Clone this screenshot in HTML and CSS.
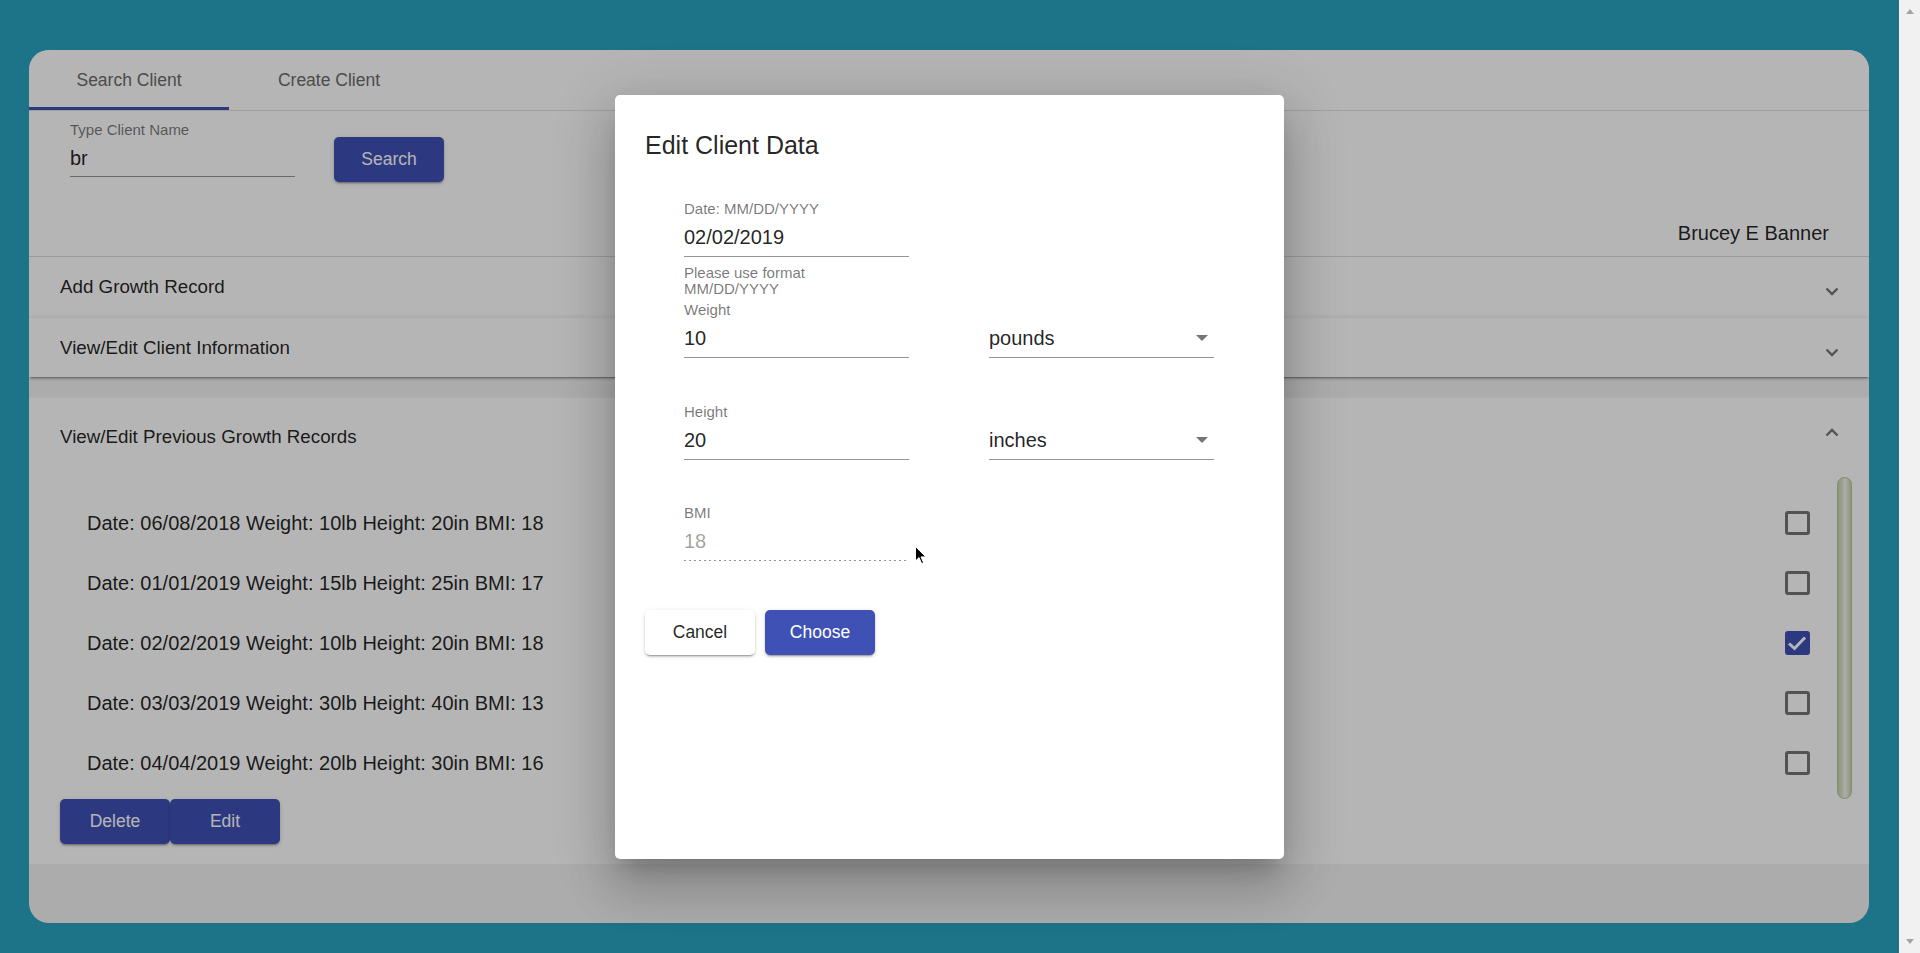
FILE: index.html
```html
<!DOCTYPE html>
<html lang="en">
<head>
<meta charset="utf-8">
<title>Client Growth</title>
<link rel="stylesheet" href="styles.css">
</head>
<body>
<div class="viewport">
  <div class="page">
    <div class="card">
      <div class="top">
        <div class="tabs">
          <div class="tab active">Search Client</div>
          <div class="tab">Create Client</div>
        </div>
        <div class="search">
          <div class="search-row">
            <div class="field search-field">
              <div class="field-label">Type Client Name</div>
              <div class="field-value">br</div>
            </div>
            <button class="btn btn-primary search-btn">Search</button>
          </div>
          <div class="client-name">Brucey E Banner</div>
        </div>
      </div>

      <div class="accordion">
        <div class="panel">
          <div class="panel-header">
            <span>Add Growth Record</span>
            <svg class="chev chev-down" width="14" height="9" viewBox="0 0 14 9"><path d="M1.5 1.5 L7 7 L12.5 1.5" fill="none" stroke="rgba(0,0,0,.54)" stroke-width="2.4"/></svg>
          </div>
        </div>
        <div class="panel panel-second">
          <div class="panel-header">
            <span>View/Edit Client Information</span>
            <svg class="chev chev-down" width="14" height="9" viewBox="0 0 14 9"><path d="M1.5 1.5 L7 7 L12.5 1.5" fill="none" stroke="rgba(0,0,0,.54)" stroke-width="2.4"/></svg>
          </div>
        </div>
        <div class="panel panel-expanded">
          <div class="panel-header panel-header-tall">
            <span>View/Edit Previous Growth Records</span>
            <svg class="chev chev-up" width="14" height="9" viewBox="0 0 14 9"><path d="M1.5 7.5 L7 2 L12.5 7.5" fill="none" stroke="rgba(0,0,0,.54)" stroke-width="2.4"/></svg>
          </div>
          <div class="panel-body">
            <div class="records">
              <ul class="record-list">
                <li class="record"><span>Date: 06/08/2018 Weight: 10lb Height: 20in BMI: 18</span><span class="checkbox"></span></li>
                <li class="record"><span>Date: 01/01/2019 Weight: 15lb Height: 25in BMI: 17</span><span class="checkbox"></span></li>
                <li class="record"><span>Date: 02/02/2019 Weight: 10lb Height: 20in BMI: 18</span><span class="checkbox checked"><svg width="24" height="24" viewBox="0 0 24 24"><path d="M4 12.5 L9.5 17.5 L20 6.5" fill="none" stroke="#fff" stroke-width="3"/></svg></span></li>
                <li class="record"><span>Date: 03/03/2019 Weight: 30lb Height: 40in BMI: 13</span><span class="checkbox"></span></li>
                <li class="record"><span>Date: 04/04/2019 Weight: 20lb Height: 30in BMI: 16</span><span class="checkbox"></span></li>
              </ul>
              <div class="scroll-track"><div class="scroll-thumb"></div></div>
            </div>
            <div class="record-actions">
              <button class="btn btn-primary">Delete</button>
              <button class="btn btn-primary">Edit</button>
            </div>
          </div>
        </div>
      </div>
    </div>

    <div class="backdrop"></div>

    <div class="dialog-layer">
      <div class="dialog">
        <h2 class="dialog-title">Edit Client Data</h2>
        <div class="dialog-form">
          <div class="form-row">
            <div class="dfield">
              <div class="field-label">Date: MM/DD/YYYY</div>
              <div class="dvalue">02/02/2019</div>
              <div class="dhint">Please use format<br>MM/DD/YYYY</div>
            </div>
          </div>
          <div class="form-row">
            <div class="dfield">
              <div class="field-label">Weight</div>
              <div class="dvalue">10</div>
            </div>
            <div class="dfield">
              <div class="field-label"></div>
              <div class="dvalue dselect"><span>pounds</span><span class="select-arrow"></span></div>
            </div>
          </div>
          <div class="form-row">
            <div class="dfield">
              <div class="field-label">Height</div>
              <div class="dvalue">20</div>
            </div>
            <div class="dfield">
              <div class="field-label"></div>
              <div class="dvalue dselect"><span>inches</span><span class="select-arrow"></span></div>
            </div>
          </div>
          <div class="form-row">
            <div class="dfield">
              <div class="field-label">BMI</div>
              <div class="dvalue ddisabled">18</div>
            </div>
          </div>
        </div>
        <div class="dialog-actions">
          <button class="btn btn-plain">Cancel</button>
          <button class="btn btn-primary">Choose</button>
        </div>
      </div>
    </div>

    <svg class="cursor" width="12" height="19" viewBox="0 0 12 19"><path d="M0.5 0.5 L0.5 15 L4 11.6 L6.6 17.6 L8.6 16.7 L6 10.9 L10.8 10.9 Z" fill="#000" stroke="#fff" stroke-width="1"/></svg>
  </div>

  <div class="os-scrollbar">
    <span class="os-arrow os-up"></span>
    <span class="os-arrow os-down"></span>
  </div>
</div>
</body>
</html>
```

FILE: styles.css
```css
* { box-sizing: border-box; }

html, body {
  margin: 0;
  padding: 0;
  width: 100%;
  height: 100%;
  overflow: hidden;
}

body {
  font-family: "Liberation Sans", Arial, sans-serif;
  color: rgba(0, 0, 0, .87);
}

.viewport {
  display: flex;
  width: 1920px;
  height: 953px;
}

.page {
  position: relative;
  flex: 1;
  display: flex;
  background: #2aa4c1;
  padding: 50px 30px 30px 29px;
}

.card {
  flex: 1;
  display: flex;
  flex-direction: column;
  background: #f3f3f3;
  border-radius: 20px;
  overflow: hidden;
}

/* ---------- top section ---------- */
.top {
  background: #fff;
  border-bottom: 1px solid rgba(0, 0, 0, .14);
}

.tabs {
  display: flex;
  border-bottom: 1px solid rgba(0, 0, 0, .12);
}

.tab {
  position: relative;
  width: 200px;
  height: 60px;
  display: flex;
  align-items: center;
  justify-content: center;
  font-size: 17.5px;
  color: #6b6b6b;
}

.tab.active::after {
  content: "";
  position: absolute;
  left: 0;
  right: 0;
  bottom: 0;
  height: 3px;
  background: #3f51b5;
}

.search {
  height: 145px;
  padding: 10px 40px 0 41px;
}

.search-row {
  display: flex;
  align-items: flex-start;
  gap: 39px;
}

.field-label {
  height: 17px;
  font-size: 15px;
  line-height: 17px;
  color: rgba(0, 0, 0, .54);
  white-space: nowrap;
}

.search-field { width: 225px; }

.field-value {
  margin-top: 8px;
  font-size: 20px;
  line-height: 24px;
  padding-bottom: 6px;
  border-bottom: 1px solid rgba(0, 0, 0, .42);
}

.search-btn { margin-top: 16px; }

.client-name {
  margin-top: 39px;
  text-align: right;
  font-size: 20px;
  line-height: 24px;
}

/* ---------- buttons ---------- */
.btn {
  width: 110px;
  height: 45px;
  border: none;
  border-radius: 5px;
  font-family: "Liberation Sans", Arial, sans-serif;
  font-size: 17.5px;
  font-weight: 500;
  padding: 0;
  box-shadow: 0 3px 1px -2px rgba(0, 0, 0, .2), 0 2px 2px 0 rgba(0, 0, 0, .14), 0 1px 5px 0 rgba(0, 0, 0, .12);
}

.btn-primary {
  background: #3f51b5;
  color: #fff;
}

.btn-plain {
  background: #fff;
  color: rgba(0, 0, 0, .87);
}

/* ---------- accordion ---------- */
.accordion {
  display: flex;
  flex-direction: column;
}

.panel {
  background: #fff;
}

.panel-second {
  border-top: 1px solid rgba(0, 0, 0, .05);
  box-shadow: 0 3px 1px -2px rgba(0, 0, 0, .2), 0 2px 2px 0 rgba(0, 0, 0, .14), 0 1px 5px 0 rgba(0, 0, 0, .12);
}

.panel-second .panel-header { height: 59px; }

.panel-header {
  height: 60px;
  display: flex;
  align-items: center;
  justify-content: space-between;
  padding: 0 30px 0 31px;
  font-size: 18.75px;
}

.panel-header-tall { height: 80px; }

.chev { flex: none; }
.chev-down { margin-top: 9px; }
.chev-up { margin-bottom: 9px; }

.panel-expanded {
  margin-top: 20px;
  border-top: 1px solid rgba(0, 0, 0, .04);
}

.panel-expanded .panel-header-tall { height: 78px; }

.panel-body {
  padding: 0 17px 20px 31px;
}

.records {
  display: flex;
  height: 323px;
}

.record-list {
  flex: 1;
  list-style: none;
  margin: 0;
  padding: 17px 0 0;
}

.record {
  height: 60px;
  display: flex;
  align-items: center;
  justify-content: space-between;
  padding: 0 27px;
  font-size: 20px;
}

.checkbox {
  width: 25px;
  height: 24px;
  border: 3px solid rgba(0, 0, 0, .54);
  border-radius: 3px;
  display: flex;
}

.checkbox.checked {
  border: none;
  background: #3f51b5;
}

.scroll-track {
  width: 15px;
  padding-top: 1px;
}

.scroll-thumb {
  height: 322px;
  border-radius: 8px;
  background: linear-gradient(to right, #c2d4a6 0%, #dfe5d2 35%, #f4f5ef 55%, #dfe5d2 75%, #c2d4a6 100%);
  border: 1px solid #b6c79a;
}

.record-actions {
  display: flex;
}

/* ---------- backdrop & dialog ---------- */
.backdrop {
  position: absolute;
  inset: 0;
  background: rgba(0, 0, 0, .29);
}

.dialog-layer {
  position: absolute;
  inset: 0;
  display: flex;
  align-items: center;
  justify-content: center;
}

.dialog {
  width: 669px;
  height: 764px;
  background: #fff;
  border-radius: 5px;
  padding: 30px;
  box-shadow: 0 14px 19px -9px rgba(0, 0, 0, .2), 0 30px 48px 4px rgba(0, 0, 0, .14), 0 11px 58px 10px rgba(0, 0, 0, .12);
}

.dialog-title {
  margin: 0 0 25px;
  font-size: 25px;
  line-height: 40px;
  font-weight: 500;
  color: rgba(0, 0, 0, .87);
}

.dialog-form {
  padding: 10.5px 0 0 39px;
}

.form-row {
  display: flex;
  gap: 80px;
  height: 101.3px;
}

.dfield { width: 225px; }

.dvalue {
  margin-top: 8px;
  font-size: 20px;
  line-height: 24px;
  padding-bottom: 7px;
  border-bottom: 1px solid rgba(0, 0, 0, .42);
}

.dselect {
  display: flex;
  align-items: center;
  justify-content: space-between;
  padding-right: 6px;
}

.select-arrow {
  width: 0;
  height: 0;
  border-left: 6px solid transparent;
  border-right: 6px solid transparent;
  border-top: 6px solid rgba(0, 0, 0, .54);
}

.ddisabled {
  color: rgba(0, 0, 0, .38);
  border-bottom: none;
  padding-bottom: 8px;
  width: 224px;
  background-image: linear-gradient(to right, rgba(0, 0, 0, .42) 0%, rgba(0, 0, 0, .42) 33%, transparent 0%);
  background-size: 5px 1px;
  background-repeat: repeat-x;
  background-position: 0 100%;
}

.dhint {
  margin-top: 8px;
  font-size: 15px;
  line-height: 16px;
  color: rgba(0, 0, 0, .54);
}

.dialog-actions {
  display: flex;
  gap: 10px;
  margin-top: 5px;
}

.cursor {
  position: absolute;
  left: 915px;
  top: 546px;
}

/* ---------- native-looking scrollbar ---------- */
.os-scrollbar {
  width: 21px;
  background: #f1f1f1;
  display: flex;
  flex-direction: column;
  justify-content: space-between;
  align-items: center;
  padding: 9px 0 9px;
}

.os-arrow {
  width: 0;
  height: 0;
  border-left: 4.5px solid transparent;
  border-right: 4.5px solid transparent;
}

.os-up { border-bottom: 5px solid #a3a3a3; }
.os-down { border-top: 5px solid #a3a3a3; }
```
